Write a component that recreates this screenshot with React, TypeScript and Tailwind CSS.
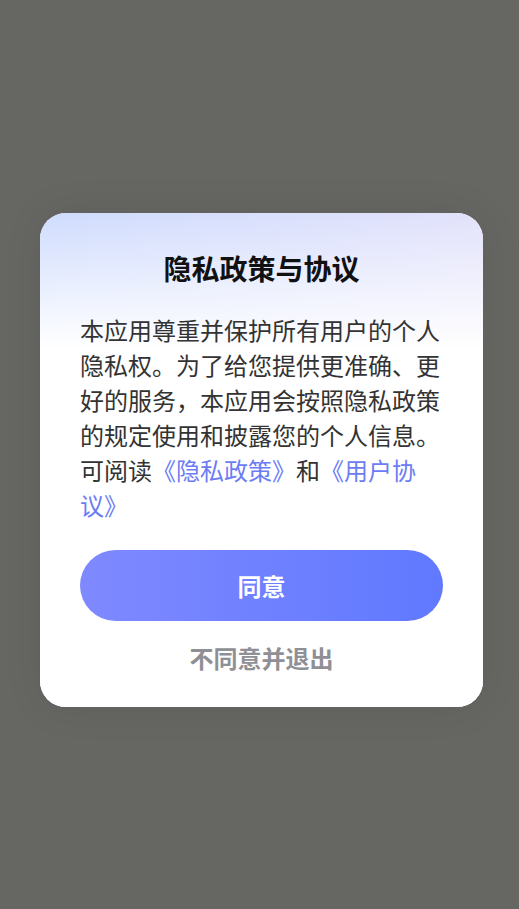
import React from "react";

export default function App() {
  return (
    <div
      className="w-[519px] h-[909px] bg-[#666662] flex items-start justify-start pl-[40px] pt-[213px]"
      style={{ fontFamily: '"Noto Sans CJK SC", "Noto Sans", sans-serif' }}
    >
      <div className="w-[443px] rounded-[26px] bg-white shadow-[0_0_40px_rgba(0,0,0,0.08)] overflow-hidden">
        <div className="bg-[linear-gradient(180deg,rgba(255,255,255,0)_0%,#ffffff_135px),linear-gradient(90deg,#cfdcfe_0%,#e2e2fb_100%)] px-[40px] pt-[35px] pb-[32px] flex flex-col">
          <h1 className="text-center text-[28px] leading-[40px] font-bold text-[#111111]">
            隐私政策与协议
          </h1>
          <p className="mt-[24px] text-[24px] leading-[35px] text-[#333333]">
            本应用尊重并保护所有用户的个人隐私权。为了给您提供更准确、更好的服务，本应用会按照隐私政策的规定使用和披露您的个人信息。可阅读
            <span className="text-[#6c7cf4]">《隐私政策》</span>和
            <span className="text-[#6c7cf4]">《用户协议》</span>
          </p>
          <button className="mt-[28px] h-[71px] w-full rounded-[36px] bg-[linear-gradient(90deg,#7f89ff_0%,#6079ff_100%)] text-white text-[24px] font-bold">
            同意
          </button>
          <div className="mt-[20px] text-center text-[24px] leading-[34px] font-bold text-[#8f9095]">
            不同意并退出
          </div>
        </div>
      </div>
    </div>
  );
}
